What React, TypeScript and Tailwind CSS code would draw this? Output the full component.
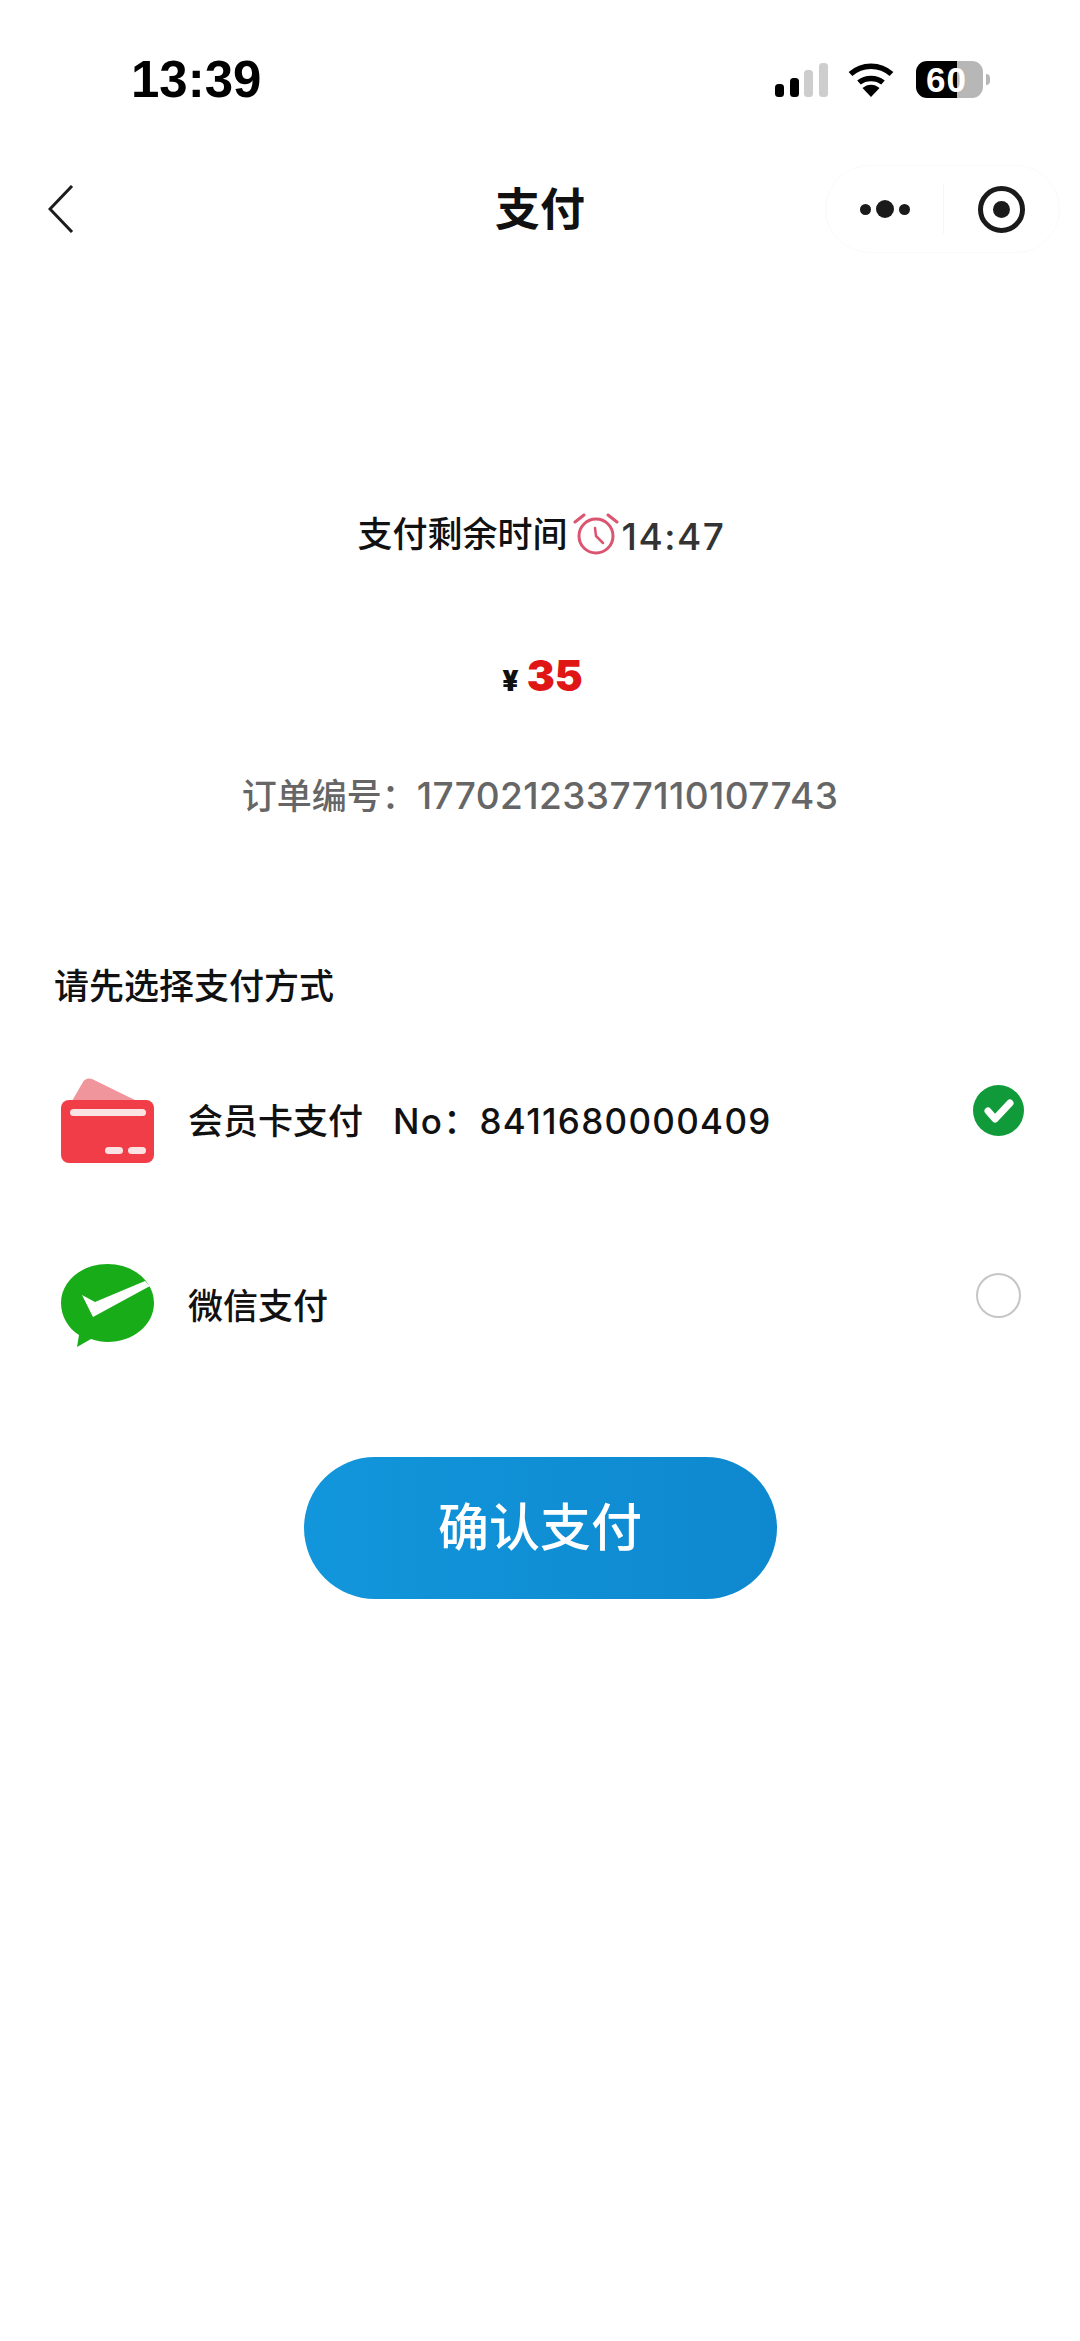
const cjk = "font-['Inter','Noto_Sans_CJK_SC',sans-serif]";

const SignalIcon = () => (
  <svg width="53" height="34" viewBox="0 0 53 34">
    <rect x="0" y="21" width="9" height="13" rx="3.5" fill="#000" />
    <rect x="15" y="15" width="9" height="19" rx="3.5" fill="#000" />
    <rect x="29" y="7" width="9" height="27" rx="3.5" fill="#cdcdcd" />
    <rect x="44" y="0" width="9" height="34" rx="3.5" fill="#cdcdcd" />
  </svg>
);

const WifiIcon = () => (
  <svg width="46" height="34" viewBox="0 0 46 34">
    <path d="M2.500 11 C14 0.500 32 0.500 43.500 11" fill="none" stroke="#000" strokeWidth="5.500" />
    <path d="M11 19.500 C17.500 14 28.500 14 35 19.500" fill="none" stroke="#000" strokeWidth="5.500" />
    <path d="M14.500 25 C19.500 20.500 26.500 20.500 31.500 25 L23 34 Z" fill="#000" />
  </svg>
);

const BatteryIcon = () => (
  <div className="relative ml-[2px] flex h-[37px] w-[75px] items-center">
    <div className="flex h-full w-[67px] overflow-hidden rounded-[11px]">
      <div className="w-[41px] bg-black" />
      <div className="flex-1 bg-[#b7b7b7]" />
    </div>
    <div className="ml-[3px] h-[11px] w-[4px] rounded-r-full bg-[#b7b7b7]" />
    <span className="absolute left-[10px] top-0 font-['Liberation_Sans',sans-serif] text-[35px] leading-[37px] font-bold tracking-[1px] text-white">
      60
    </span>
  </div>
);

const ClockIcon = () => (
  <svg width="46" height="42" viewBox="0 0 46 42" fill="none" stroke="#dc5570" strokeWidth="3" className="ml-[5px] mr-[3px]">
    <circle cx="23" cy="23" r="17" />
    <path d="M22 15 L23 23 L30 30" strokeWidth="2.500" strokeLinecap="round" strokeLinejoin="round" />
    <path d="M2 9 L11 2 M35 2 L44 9" strokeLinecap="round" />
  </svg>
);

const CardIcon = () => (
  <svg width="93" height="85" viewBox="0 0 93 85">
    <path d="M11 23 L22 4 Q25 -1 31 1 L76 23 Z" fill="#f0959b" />
    <rect x="0" y="22" width="93" height="63" rx="8" fill="#f13d47" />
    <rect x="9" y="31" width="76" height="7" rx="3.500" fill="#fbe3e4" />
    <rect x="44" y="69" width="18" height="7" rx="3.500" fill="#fbe3e4" />
    <rect x="67" y="69" width="18" height="7" rx="3.500" fill="#fbe3e4" />
  </svg>
);

const WechatIcon = () => (
  <svg width="93" height="83" viewBox="0 0 93 83">
    <path
      d="M46.500 0 C72 0 93 17 93 39 C93 61 72 78 46.500 78 C41 78 36 77 30 75 L16 83 L18 71 C7 64 0 52 0 39 C0 17 21 0 46.500 0 Z"
      fill="#18ad18"
    />
    <path d="M21 31 L34 38 L84 17 L89 22 L32 53 Z" fill="#fff" />
  </svg>
);

const PayRow = ({ icon, label, checked }: { icon: React.ReactNode; label: React.ReactNode; checked?: boolean }) => (
  <div className="flex items-center pr-[56px] pl-[61px]">
    <div className="w-[127px] shrink-0">{icon}</div>
    <div className="flex-1 text-[35px] leading-[44px] font-medium text-[#111]">{label}</div>
    {checked ? (
      <div className="mb-[20px] flex h-[51px] w-[51px] items-center justify-center rounded-full bg-[#109a3a]">
        <svg width="32" height="28" viewBox="0 0 32 28" fill="none" stroke="#fff" strokeWidth="7" strokeLinecap="round" strokeLinejoin="round">
          <path d="M5 14 L12 22 L27 6" />
        </svg>
      </div>
    ) : (
      <div className="mx-[3px] mb-[20px] h-[45px] w-[45px] rounded-full border-2 border-[#c6c6c6]" />
    )}
  </div>
);

export default function App() {
  return (
    <div className={`flex h-[2341px] w-[1080px] flex-col overflow-hidden bg-white ${cjk}`}>
      {/* status bar */}
      <div className="flex h-[61px] shrink-0" />
      <div className="flex h-[37px] items-center justify-between pr-[89px] pl-[131px]">
        <span className="font-['Liberation_Sans',sans-serif] text-[51px] leading-[37px] font-bold text-black">13:39</span>
        <div className="flex items-center gap-[20px]">
          <SignalIcon />
          <WifiIcon />
          <BatteryIcon />
        </div>
      </div>

      {/* nav bar */}
      <div className="mt-[67px] grid h-[88px] grid-cols-[1fr_auto_1fr] items-center px-[20px]">
        <svg width="26" height="48" viewBox="0 0 26 48" fill="none" stroke="#1c1c1c" strokeWidth="3" className="ml-[28px]">
          <path d="M24 1 L2 24 L24 47" />
        </svg>
        <span className="text-[45px] leading-none font-bold text-[#111]">支付</span>
        <div className="flex h-[88px] w-[235px] items-center justify-self-end rounded-[44px] border border-[#fafafa]">
          <div className="flex w-[117px] items-center justify-center gap-[2px]">
            <span className="h-[11px] w-[11px] rounded-full bg-[#1a1a1a]" />
            <span className="mx-[3px] h-[18px] w-[18px] rounded-full bg-[#1a1a1a]" />
            <span className="h-[11px] w-[11px] rounded-full bg-[#1a1a1a]" />
          </div>
          <div className="h-[50px] w-px bg-[#f6f6f6]" />
          <div className="flex flex-1 items-center justify-center">
            <div className="flex h-[47px] w-[47px] items-center justify-center rounded-full border-[5px] border-[#1a1a1a]">
              <span className="h-[17px] w-[17px] rounded-full bg-[#1a1a1a]" />
            </div>
          </div>
        </div>
      </div>

      {/* countdown */}
      <div className="mt-[259px] flex h-[44px] items-center justify-center pl-[3px]">
        <span className="text-[35px] leading-[44px] font-medium text-[#111]">支付剩余时间</span>
        <ClockIcon />
        <span className="mt-[6px] text-[37px] leading-[44px] font-medium tracking-[1.500px] text-[#333]">14:47</span>
      </div>

      {/* amount */}
      <div className="mt-[98px] flex h-[44px] items-baseline justify-center gap-[8px] pl-[5px]">
        <span className="text-[28px] font-black text-[#111]">¥</span>
        <span className="text-[42px] leading-[44px] font-black text-[#e01515]">35</span>
      </div>

      {/* order number */}
      <div className="mt-[76px] text-center text-[35px] leading-[44px] font-medium text-[#666]">
        订单编号：<span className="text-[37px] tracking-[0.4px]">17702123377110107743</span>
      </div>

      {/* pay methods */}
      <div className="mt-[146px] pl-[54px] text-[35px] leading-[44px] font-medium text-[#111]">请先选择支付方式</div>
      <div className="mt-[70px]">
        <PayRow
          icon={<CardIcon />}
          label={
            <span>
              会员卡支付<span className="ml-[30px] tracking-[1.300px]">No：8411680000409</span>
            </span>
          }
          checked
        />
      </div>
      <div className="mt-[101px]">
        <PayRow icon={<WechatIcon />} label="微信支付" />
      </div>

      {/* confirm */}
      <div className="mt-[110px] flex justify-center">
        <button className="h-[142px] w-[473px] rounded-full bg-gradient-to-r from-[#1296db] to-[#0e88cf] text-[51px] font-medium text-white">
          确认支付
        </button>
      </div>
    </div>
  );
}
